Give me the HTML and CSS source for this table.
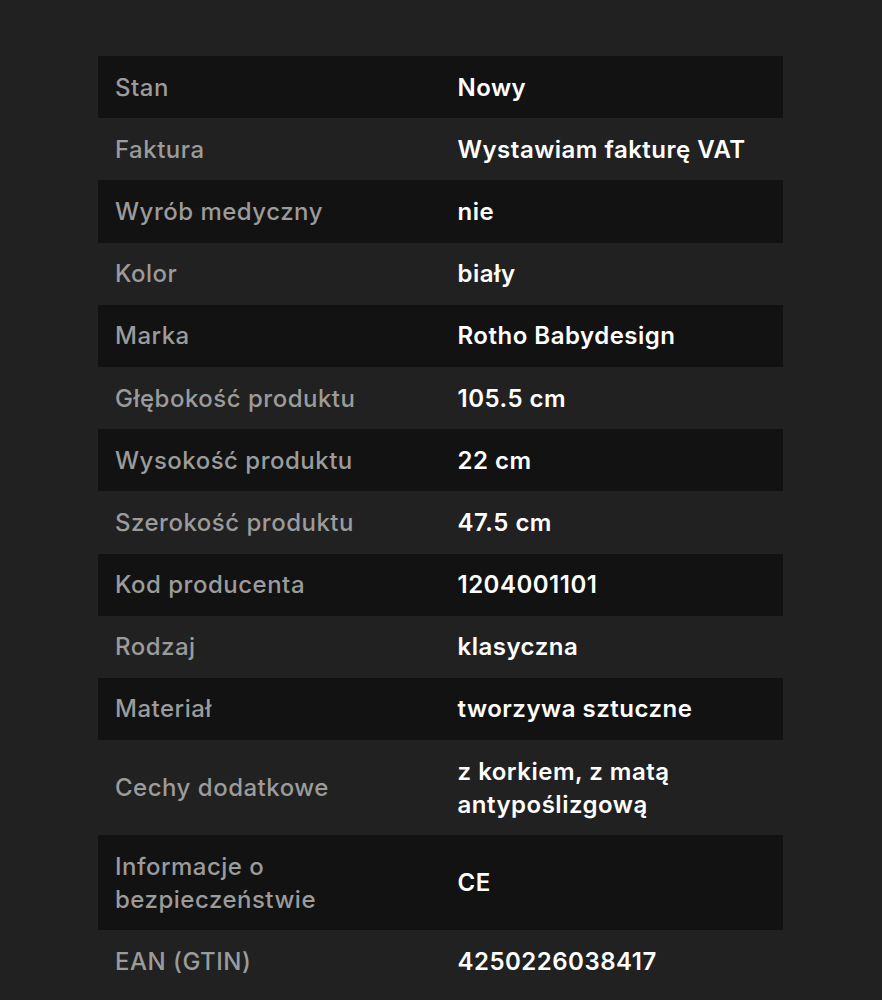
FILE: index.html
```html
<!DOCTYPE html>
<html lang="pl">
<head>
<meta charset="utf-8">
<link rel="stylesheet" href="styles.css">
</head>
<body>
<div class="page">
  <table class="specs">
    <tbody>
      <tr><td class="label">Stan</td><td class="value">Nowy</td></tr>
      <tr><td class="label">Faktura</td><td class="value">Wystawiam fakturę VAT</td></tr>
      <tr><td class="label">Wyrób medyczny</td><td class="value">nie</td></tr>
      <tr><td class="label">Kolor</td><td class="value">biały</td></tr>
      <tr><td class="label">Marka</td><td class="value">Rotho Babydesign</td></tr>
      <tr><td class="label">Głębokość produktu</td><td class="value">105.5 cm</td></tr>
      <tr><td class="label">Wysokość produktu</td><td class="value">22 cm</td></tr>
      <tr><td class="label">Szerokość produktu</td><td class="value">47.5 cm</td></tr>
      <tr><td class="label">Kod producenta</td><td class="value">1204001101</td></tr>
      <tr><td class="label">Rodzaj</td><td class="value">klasyczna</td></tr>
      <tr><td class="label">Materiał</td><td class="value">tworzywa sztuczne</td></tr>
      <tr><td class="label">Cechy dodatkowe</td><td class="value">z korkiem, z matą antypoślizgową</td></tr>
      <tr><td class="label">Informacje o bezpieczeństwie</td><td class="value">CE</td></tr>
      <tr><td class="label">EAN (GTIN)</td><td class="value">4250226038417</td></tr>
    </tbody>
  </table>
</div>
</body>
</html>
```

FILE: styles.css
```css
html, body {
  margin: 0;
  padding: 0;
  background: #212121;
}
.page {
  padding: 56px 99px 0 98px;
  font-family: Inter, "Noto Sans", "Liberation Sans", sans-serif;
}
.specs {
  width: 685px;
  border-collapse: collapse;
  table-layout: fixed;
}
.specs tr:nth-child(odd) {
  background: #121212;
}
.specs td {
  padding: 14.6px 17px;
  font-size: 24px;
  line-height: 33px;
  letter-spacing: 0.5px;
  vertical-align: middle;
  width: 50%;
}
.label {
  color: #9b9b9b;
  font-weight: 500;
}
.value {
  color: #ffffff;
  font-weight: 600;
}
```
